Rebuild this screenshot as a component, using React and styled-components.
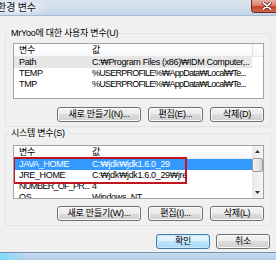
import React from 'react';
import styled, { createGlobalStyle } from 'styled-components';

const Global = createGlobalStyle`
  html, body { margin: 0; padding: 0; background: #f0f0f0; }
  body {
    width: 276px; height: 260px; overflow: hidden;
    font-family: "Liberation Sans", "Noto Sans", "DejaVu Sans", "Noto Sans CJK KR", sans-serif;
    font-size: 9px; letter-spacing: -0.25px; color: #000;
  }
`;

const Window = styled.div`
  width: 276px; height: 260px; display: flex; flex-direction: column;
  overflow: hidden; background: #f0f0f0;
`;

const TitleBar = styled.div`
  height: 16px; flex: none; box-sizing: border-box; display: flex; align-items: flex-start;
  border-bottom: 1px solid #a7bad0;
  background:
    radial-gradient(ellipse 40px 9px at 12px 8px, rgba(255,255,255,0.85), rgba(255,255,255,0) 100%),
    linear-gradient(180deg, #dbe5f0 0%, #cfdcea 55%, #c3d5e9 100%);
`;

const Title = styled.div`
  margin-left: -3px; line-height: 14px; font-size: 10px; letter-spacing: 0;
  font-family: "Noto Sans CJK KR", sans-serif; color: #111;
`;

const CloseBtn = styled.div`
  margin-left: auto; margin-right: -6px; width: 31px; height: 13px; box-sizing: border-box;
  border: 1px solid #6e2b22; border-top: none; border-radius: 0 0 4px 4px;
  background: linear-gradient(180deg, #e9b0a3 0%, #d8806b 45%, #c5472c 55%, #d4654a 100%);
  display: flex; align-items: center; justify-content: center;
`;

const Body = styled.div`
  flex: 1; display: flex; flex-direction: column; padding: 0 5px;
`;

const Group = styled.fieldset`
  margin: ${p => p.$top}px 0 0; padding: 0 6px 4px 7px; min-width: 0;
  border: 1px solid #dce4ea; border-radius: 3px;
`;

const Legend = styled.legend`
  padding: 0 2px; margin-left: -4px; line-height: 11px;
`;

const ListBox = styled.div`
  position: relative; margin-top: ${p => p.$gap}px; height: ${p => p.$h}px;
  box-sizing: border-box; border: 1px solid #a3a3a3; background: #fff;
  display: flex; overflow: hidden;
`;

const ListMain = styled.div`
  flex: 1; min-width: 0; display: flex; flex-direction: column;
`;

const Header = styled.div`
  display: flex; height: 13px; flex: none; box-sizing: border-box;
  border-bottom: 1px solid #e8e8e8;
  background: linear-gradient(180deg, #ffffff 0%, #f7f8fa 100%);
`;

const HeadCell = styled.div`
  width: ${p => (p.$w ? `${p.$w}px` : 'auto')}; flex: ${p => (p.$w ? 'none' : '1')};
  box-sizing: border-box; padding-left: ${p => p.$pad}px; line-height: 12px;
  border-right: ${p => (p.$divider ? '1px solid #dfe3e8' : 'none')};
  white-space: nowrap; overflow: hidden;
`;

const Row = styled.div`
  display: flex; width: 238px; height: 11px; line-height: 11px; flex: none;
  background: ${p => (p.$sel === 'focus' ? '#3399ff' : p.$sel === 'idle' ? '#e6e6e6' : 'transparent')};
  color: ${p => (p.$sel === 'focus' ? '#fff' : '#000')};
`;

const Cell = styled.div`
  width: ${p => p.$w}px; flex: none; box-sizing: border-box; padding-left: ${p => p.$pad}px;
  white-space: nowrap; overflow: hidden;
  letter-spacing: ${p => (p.$tight ? '-0.75px' : '-0.35px')};
`;

const ScrollBar = styled.div`
  width: 11px; flex: none; display: flex; flex-direction: column;
  background: linear-gradient(90deg, #e9e9e9, #f5f5f5);
`;

const ScrollArrow = styled.div`
  height: 11px; flex: none; display: flex; align-items: center; justify-content: center;
`;

const Thumb = styled.div`
  height: 14px; flex: none; margin: 1px 0 0; box-sizing: border-box;
  border: 1px solid #9a9a9a; border-radius: 2px;
  background: linear-gradient(90deg, #f3f3f3 0%, #e8e8e8 50%, #d6d6d6 100%);
`;

const Track = styled.div` flex: 1; `;

const Highlight = styled.div`
  position: absolute; left: -1px; top: 11px; width: 174px; height: 27px;
  box-sizing: border-box; border: 2px solid #c0141f; pointer-events: none;
`;

const ButtonRow = styled.div`
  display: flex; justify-content: flex-end; gap: ${p => p.$gap}px;
  margin-top: ${p => p.$top}px; padding-right: ${p => p.$right || 0}px;
`;

const Button = styled.button`
  width: ${p => p.$w}px; height: 15px; padding: 0; box-sizing: border-box;
  font: inherit; line-height: 13px; color: #000; letter-spacing: -0.25px;
  border: 1px solid ${p => (p.$default ? '#3c7fb1' : '#707070')}; border-radius: 3px;
  box-shadow: inset 0 0 0 1px ${p => (p.$default ? '#cdeafb' : '#fbfbfb')};
  background: ${p => (p.$default
    ? 'linear-gradient(180deg, #eaf6fd 0%, #d9f0fc 50%, #bee6fd 50%, #a7d9f5 100%)'
    : 'linear-gradient(180deg, #f2f2f2 0%, #ebebeb 50%, #dddddd 50%, #cfcfcf 100%)')};
  white-space: nowrap;
`;

const BottomFrame = styled.div`
  height: 8px; flex: none; margin-top: auto; box-sizing: border-box;
  border-top: 1px solid #7592b4;
  background:
    linear-gradient(90deg, rgba(120,220,255,0.9) 0px, rgba(120,220,255,0) 26px),
    linear-gradient(180deg, #c9dcf0 0%, #b3cbe5 100%);
`;

const userVars = [
  { name: 'Path', value: 'C:₩Program Files (x86)₩IDM Computer,..', sel: 'idle' },
  { name: 'TEMP', value: '%USERPROFILE%₩AppData₩Local₩Te...', valueTight: true },
  { name: 'TMP', value: '%USERPROFILE%₩AppData₩Local₩Te...', valueTight: true },
];

const sysVars = [
  { name: 'JAVA_HOME', value: 'C:₩jdk₩jdk1.6.0_29', sel: 'focus' },
  { name: 'JRE_HOME', value: 'C:₩jdk₩jdk1.6.0_29₩jre' },
  { name: 'NUMBER_OF_PR...', value: '4', nameTight: true },
  { name: 'OS', value: 'Windows_NT' },
];

const Arrow = ({ up }) => (
  <svg width="5" height="3" viewBox="0 0 5 3">
    <path d={up ? 'M0 3 L2.5 0 L5 3 Z' : 'M0 0 L2.5 3 L5 0 Z'} fill="#333" />
  </svg>
);

const Rows = ({ items }) =>
  items.map(v => (
    <Row key={v.name} $sel={v.sel}>
      <Cell $w={77} $pad={5} $tight={v.nameTight}>{v.name}</Cell>
      <Cell $w={161} $pad={1} $tight={v.valueTight}>{v.value}</Cell>
    </Row>
  ));

export default function App() {
  return (
    <Window>
      <Global />
      <TitleBar>
        <Title>환경 변수</Title>
        <CloseBtn>
          <svg width="10" height="8" viewBox="0 0 10 8">
            <path d="M1 0.5 L9 7.5 M9 0.5 L1 7.5" stroke="#5a1d16" strokeWidth="3" strokeLinecap="round" />
            <path d="M1.3 0.8 L8.7 7.2 M8.7 0.8 L1.3 7.2" stroke="#fff" strokeWidth="1.6" strokeLinecap="round" />
          </svg>
        </CloseBtn>
      </TitleBar>
      <Body>
        <Group $top={12}>
          <Legend>MrYoo에 대한 사용자 변수(U)</Legend>
          <ListBox $gap={4} $h={56}>
            <ListMain>
              <Header>
                <HeadCell $w={74} $pad={5}>변수</HeadCell>
                <HeadCell $w={165} $pad={4} $divider>값</HeadCell>
                <HeadCell $pad={0} />
              </Header>
              <Rows items={userVars} />
            </ListMain>
          </ListBox>
          <ButtonRow $gap={7} $top={8}>
            <Button $w={84}>새로 만들기(N)...</Button>
            <Button $w={55}>편집(E)...</Button>
            <Button $w={54}>삭제(D)</Button>
          </ButtonRow>
        </Group>
        <Group $top={1}>
          <Legend>시스템 변수(S)</Legend>
          <ListBox $gap={6} $h={54}>
            <ListMain>
              <Header>
                <HeadCell $w={74} $pad={5}>변수</HeadCell>
                <HeadCell $pad={4}>값</HeadCell>
              </Header>
              <Rows items={sysVars} />
            </ListMain>
            <ScrollBar>
              <ScrollArrow><Arrow up /></ScrollArrow>
              <Thumb />
              <Track />
              <ScrollArrow><Arrow /></ScrollArrow>
            </ScrollBar>
            <Highlight />
          </ListBox>
          <ButtonRow $gap={7} $top={7}>
            <Button $w={84}>새로 만들기(W)...</Button>
            <Button $w={55}>편집(I)...</Button>
            <Button $w={54}>삭제(L)</Button>
          </ButtonRow>
        </Group>
        <ButtonRow $gap={6} $top={8} $right={1}>
          <Button $w={54} $default>확인</Button>
          <Button $w={54}>취소</Button>
        </ButtonRow>
      </Body>
      <BottomFrame />
    </Window>
  );
}
